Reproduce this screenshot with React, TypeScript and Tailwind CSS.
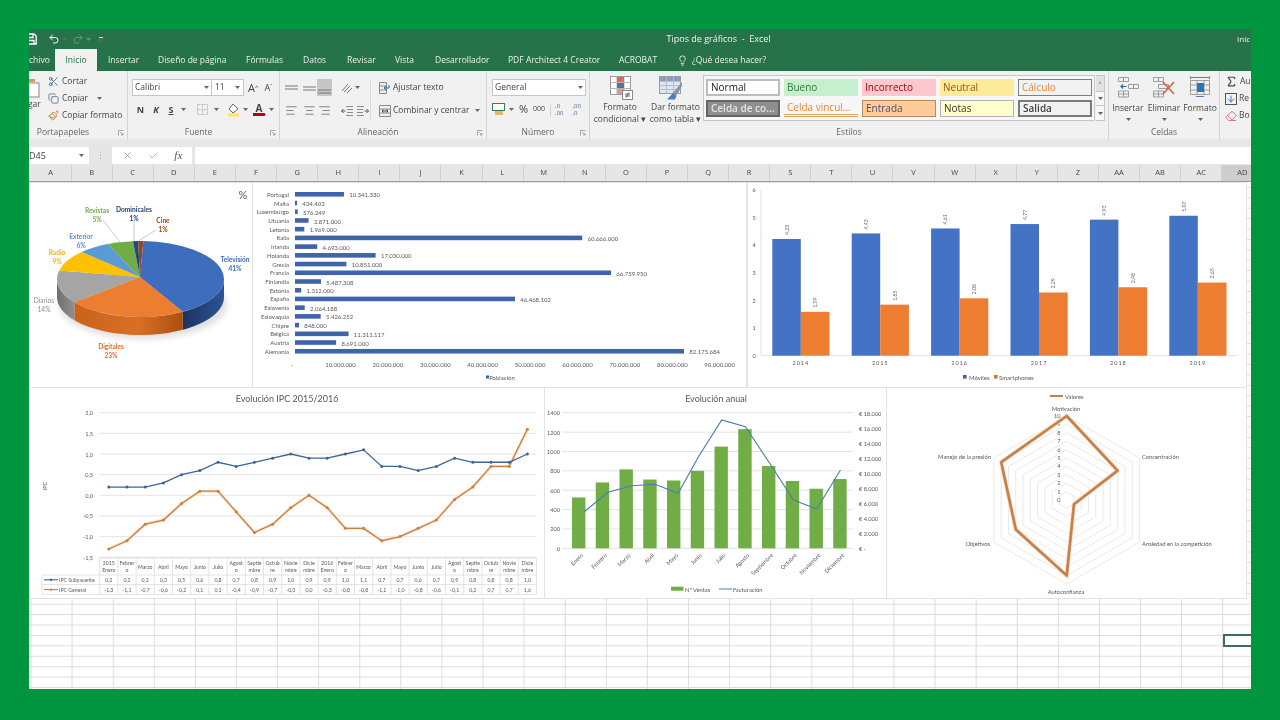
import { AlignCenter, AlignLeft, AlignRight, ArrowDown, Check, Copy, Eraser, Lightbulb, Paintbrush, Redo2, Scissors, Sigma, Undo2, X } from "lucide-react";
import type { ReactNode } from "react";

// ---- datos de los gráficos ----
const columns = "A B C D E F G H I J K L M N O P Q R S T U V W X Y Z AA AB AC AD".split(" ");

const population: [string, number, string][] = [
  ["Portugal", 10.34, "10.341.330"],
  ["Malta", 0.43, "434.403"],
  ["Luxemburgo", 0.58, "576.249"],
  ["Lituania", 2.87, "2.871.000"],
  ["Letonia", 1.97, "1.969.000"],
  ["Italia", 60.67, "60.666.000"],
  ["Irlanda", 4.69, "4.693.000"],
  ["Holanda", 17.03, "17.030.000"],
  ["Grecia", 10.85, "10.851.000"],
  ["Francia", 66.76, "66.759.950"],
  ["Finlandia", 5.49, "5.487.308"],
  ["Estonia", 1.31, "1.312.000"],
  ["España", 46.47, "46.468.102"],
  ["Eslovenia", 2.06, "2.064.188"],
  ["Eslovaquia", 5.43, "5.426.252"],
  ["Chipre", 0.85, "848.000"],
  ["Bélgica", 11.31, "11.311.117"],
  ["Austria", 8.69, "8.691.000"],
  ["Alemania", 82.18, "82.175.684"],
];

const phones = [
  [2014, 4.23, 1.59],
  [2015, 4.43, 1.85],
  [2016, 4.61, 2.08],
  [2017, 4.77, 2.29],
  [2018, 4.93, 2.48],
  [2019, 5.07, 2.65],
];

const ipcCore = [0.2, 0.2, 0.2, 0.3, 0.5, 0.6, 0.8, 0.7, 0.8, 0.9, 1.0, 0.9, 0.9, 1.0, 1.1, 0.7, 0.7, 0.6, 0.7, 0.9, 0.8, 0.8, 0.8, 1.0];
const ipcGeneral = [-1.3, -1.1, -0.7, -0.6, -0.2, 0.1, 0.1, -0.4, -0.9, -0.7, -0.3, 0.0, -0.3, -0.8, -0.8, -1.1, -1.0, -0.8, -0.6, -0.1, 0.2, 0.7, 0.7, 1.6];
const monthCells = [["Febrer", "o"], ["Marzo"], ["Abril"], ["Mayo"], ["Junio"], ["Julio"], ["Agost", "o"], ["Septie", "mbre"], ["Octub", "re"], ["Novie", "mbre"], ["Dicie", "mbre"]];
const ipcHeader = [["2015", "Enero"], ...monthCells, ["2016", "Enero"], ...monthCells];

// nombre, ventas, y de la línea de facturación, desplazamiento x de la línea
const sales: [string, number, number, number][] = [
  ["Enero", 525, 511.7, 5.6],
  ["Febrero", 680, 492.3, 5.6],
  ["Marzo", 815, 485.7, 5.5],
  ["Abril", 710, 484.3, 5],
  ["Mayo", 700, 493.3, 4.5],
  ["Junio", 800, 456.7, 1],
  ["Julio", 1050, 420, 0.5],
  ["Agosto", 1230, 426.7, 0.5],
  ["Septiembre", 850, 463.3, 1],
  ["Octubre", 695, 500, 1],
  ["Noviembre", 615, 509, 0.5],
  ["Diciembre", 715, 470, 0.5],
];

const pieSlices = [
  { pct: 41, top: "#3e6dbd", side: "url(#sideBlue)" },
  { pct: 23, top: "#ed7d31", side: "url(#sideOrange)" },
  { pct: 14, top: "#a5a5a5", side: "url(#sideGray)" },
  { pct: 9, top: "#ffc000", side: "#b08600" },
  { pct: 6, top: "#5b9bd5", side: "#3f6f9c" },
  { pct: 5, top: "#70ad47", side: "#4f7c32" },
  { pct: 1, top: "#264478", side: "#1a2f55" },
  { pct: 1, top: "#8a4b2a", side: "#5e3119" },
];

const pieLabels: [string, string, number, number, string, boolean][] = [
  ["Televisión", "41%", 235, 259, "#3f6bb5", true],
  ["Digitales", "23%", 111, 346, "#d9702a", true],
  ["Diarios", "14%", 44, 300, "#8c8c8c", false],
  ["Radio", "9%", 57, 252, "#efb60a", true],
  ["Exterior", "6%", 81, 236, "#5b8fc8", true],
  ["Revistas", "5%", 97, 210, "#70ad47", true],
  ["Dominicales", "1%", 134, 209, "#26406f", true],
  ["Cine", "1%", 163, 220, "#9e480e", true],
];

const radarAxes: [string, number][] = [
  ["Motivación", 10],
  ["Concentración", 7],
  ["Ansiedad en la competición", 1],
  ["Autoconfianza", 9],
  ["Objetivos", 7],
  ["Manejo de la presión", 9],
];

// ---- gráficos, con viewBox en coordenadas de la página ----
function PieChart() {
  const pt = (a: number, dy = 0) => [140.5 + 83.5 * Math.sin((a * Math.PI) / 180), 279 - 38 * Math.cos((a * Math.PI) / 180) + dy];
  let angle = 2;
  const parts = pieSlices.map((s) => {
    const a0 = angle;
    angle += s.pct * 3.6;
    return { ...s, a0, a1: angle };
  });
  const wall = (a0: number, a1: number) => {
    const from = Math.max(a0, 90);
    const to = Math.min(a1, 270);
    if (from >= to) return "";
    const steps = Array.from({ length: 25 }, (_, i) => from + ((to - from) * i) / 24);
    const up = steps.map((a) => pt(a).join(","));
    const down = steps.reverse().map((a) => pt(a, 18).join(","));
    return "M" + [...up, ...down].join("L") + "Z";
  };
  return (
    <svg viewBox="30 183 222 204" className="block h-[204px] w-[222px]">
      <defs>
        <linearGradient id="sideBlue" x1="0" x2="1" y1="0" y2="0">
          <stop offset="0" stopColor="#1b3360" />
          <stop offset="1" stopColor="#2d5596" />
        </linearGradient>
        <linearGradient id="sideOrange" x1="0" x2="1" y1="0" y2="0">
          <stop offset="0" stopColor="#c9631c" />
          <stop offset="0.6" stopColor="#d96f24" />
          <stop offset="1" stopColor="#a9500f" />
        </linearGradient>
        <linearGradient id="sideGray" x1="0" x2="1" y1="0" y2="0">
          <stop offset="0" stopColor="#6f6f6f" />
          <stop offset="1" stopColor="#8f8f8f" />
        </linearGradient>
        <filter id="pieShadow" x="-20%" y="-20%" width="140%" height="140%">
          <feGaussianBlur stdDeviation="3" />
        </filter>
      </defs>
      <ellipse cx="143" cy="305" rx="84" ry="34" fill="#000" opacity="0.12" filter="url(#pieShadow)" />
      {parts.map((s) => (
        <path key={s.top} d={wall(s.a0, s.a1)} fill={s.side} />
      ))}
      {parts.map((s) => {
        const [x0, y0] = pt(s.a0);
        const [x1, y1] = pt(s.a1);
        return <path key={s.top} d={`M140 277L${x0} ${y0}A83.5 38 0 ${s.a1 - s.a0 > 180 ? 1 : 0} 1 ${x1} ${y1}Z`} fill={s.top} />;
      })}
      <g stroke="#a6a6a6" strokeWidth="0.6" fill="none">
        <path d="M103 220L120 242" />
        <path d="M134 221L134 241" />
        <path d="M156 230L138 241" />
      </g>
      {pieLabels.map(([name, pct, x, y, color, bold]) => (
        <g key={name} fill={color} fontSize="6.6" fontWeight={bold ? 700 : 400} textAnchor="middle" dominantBaseline="central">
          <text x={x} y={y}>{name}</text>
          <text x={x} y={y + 8.5}>{pct}</text>
        </g>
      ))}
      <text x="243" y="194" fontSize="11" fill="#595959" textAnchor="middle" dominantBaseline="central">%</text>
    </svg>
  );
}

function PopulationChart() {
  const axis = ["10.000.000", "20.000.000", "30.000.000", "40.000.000", "50.000.000", "60.000.000", "70.000.000", "80.000.000", "90.000.000"];
  return (
    <svg viewBox="253 183 493 204" className="block h-[204px] w-[493px]">
      {population.map(([name, value, label], i) => {
        const y = 194.3 + i * 8.72;
        const end = 295 + value * 4.734;
        return (
          <g key={name} fontSize="6" fill="#595959" dominantBaseline="central">
            <text x="289" y={y} textAnchor="end">{name}</text>
            <rect x="295" y={y - 2.3} width={end - 295} height="4.6" fill="#3f64ab" />
            <text x={end + 5.3} y={y + 0.6}>{label}</text>
          </g>
        );
      })}
      <g fontSize="6" fill="#595959" textAnchor="middle" dominantBaseline="central">
        <text x="292" y="364">-</text>
        {axis.map((t, i) => (
          <text key={t} x={340.5 + i * 47.4} y="364">{t}</text>
        ))}
        <rect x="486" y="375.5" width="3" height="3" fill="#3f64ab" />
        <text x="502" y="377">Población</text>
      </g>
    </svg>
  );
}

function PhonesChart() {
  const y = (v: number) => 355.7 - v * 27.6;
  const fmt = (v: number) => v.toFixed(2).replace(".", ",");
  return (
    <svg viewBox="748 183 498 204" className="block h-[204px] w-[498px]">
      <path d="M761 190V355.7H1236" stroke="#d9d9d9" strokeWidth="0.8" fill="none" />
      {[0, 1, 2, 3, 4, 5, 6].map((v) => (
        <text key={v} x="754" y={y(v)} fontSize="5.5" fill="#595959" textAnchor="middle" dominantBaseline="central">{v}</text>
      ))}
      {phones.map(([year, a, b], i) => {
        const x = 772.3 + i * 79.4;
        return (
          <g key={year} fontSize="5.2" fill="#6b6b6b">
            <rect x={x} y={y(a)} width="28.5" height={355.7 - y(a)} fill="#4472c4" />
            <rect x={x + 28.5} y={y(b)} width="28.7" height={355.7 - y(b)} fill="#ed7d31" />
            <text transform={`translate(${x + 14.3} ${y(a) - 4}) rotate(-90)`} dominantBaseline="central">{fmt(a)}</text>
            <text transform={`translate(${x + 42.9} ${y(b) - 4}) rotate(-90)`} dominantBaseline="central">{fmt(b)}</text>
            <text x={x + 28.5} y="362.7" fontSize="5.6" letterSpacing="0.9" textAnchor="middle" dominantBaseline="central" fill="#595959">{year}</text>
          </g>
        );
      })}
      <g fontSize="6" fill="#595959" dominantBaseline="central">
        <rect x="963" y="375" width="3.6" height="3.6" fill="#3b5f9f" />
        <text x="969" y="377">Móviles</text>
        <rect x="994" y="375" width="3.6" height="3.6" fill="#d8742e" />
        <text x="999" y="377">Smartphones</text>
      </g>
    </svg>
  );
}

function IpcChart() {
  const left = 99.7;
  const cell = 18.2;
  const y = (v: number) => 412.7 + (2 - v) * 41.3;
  const cx = (i: number) => left + cell * (i + 0.5);
  const line = (data: number[]) => data.map((v, i) => `${cx(i)},${y(v)}`).join(" ");
  const fmt = (v: number) => v.toFixed(1).replace(".", ",");
  const ticks = [2, 1.5, 1, 0.5, 0, -0.5, -1, -1.5];
  return (
    <svg viewBox="30 388 514 210" className="block h-[210px] w-[514px]">
      <text x="287" y="398" fontSize="9" fill="#595959" textAnchor="middle" dominantBaseline="central">Evolución IPC 2015/2016</text>
      <text transform="translate(44 486) rotate(-90)" fontSize="5.6" fill="#595959" textAnchor="middle" dominantBaseline="central">IPC</text>
      {ticks.map((v) => (
        <g key={v}>
          <line x1={left} x2="536.5" y1={y(v)} y2={y(v)} stroke="#dcdcdc" strokeWidth="0.8" />
          <text x="93" y={y(v)} fontSize="5.6" fill="#595959" textAnchor="end" dominantBaseline="central">{fmt(v)}</text>
        </g>
      ))}
      <polyline points={line(ipcGeneral)} fill="none" stroke="#fbe3cd" strokeWidth="3" />
      <polyline points={line(ipcGeneral)} fill="none" stroke="#c9803e" strokeWidth="1.3" />
      {ipcGeneral.map((v, i) => (
        <circle key={i} cx={cx(i)} cy={y(v)} r="1.5" fill="#c9803e" />
      ))}
      <polyline points={line(ipcCore)} fill="none" stroke="#3b6597" strokeWidth="1.3" />
      {ipcCore.map((v, i) => (
        <circle key={i} cx={cx(i)} cy={y(v)} r="1.5" fill="#3b6597" />
      ))}
      <g stroke="#d9d9d9" strokeWidth="0.7">
        <path d="M99.7 558H536.5" />
        <path d="M42 575H536.5" />
        <path d="M42 584.5H536.5" />
        <path d="M42 594.3H536.5" />
        <path d="M42 575V594.3" />
        {ipcHeader.map((_, i) => (
          <path key={i} d={`M${left + i * cell} 558V594.3`} />
        ))}
        <path d="M536.5 558V594.3" />
      </g>
      <g fontSize="5.2" fill="#595959" textAnchor="middle" dominantBaseline="central">
        {ipcHeader.map((h, i) =>
          h.length === 2 ? (
            <g key={i}>
              <text x={cx(i)} y="562.5">{h[0]}</text>
              <text x={cx(i)} y="569.5">{h[1]}</text>
            </g>
          ) : (
            <text key={i} x={cx(i)} y="566.7">{h[0]}</text>
          )
        )}
        {ipcCore.map((v, i) => (
          <text key={i} x={cx(i)} y="579.8">{fmt(v)}</text>
        ))}
        {ipcGeneral.map((v, i) => (
          <text key={i} x={cx(i)} y="589.6">{fmt(v)}</text>
        ))}
      </g>
      <path d="M44 579.8H58" stroke="#3b6597" strokeWidth="1.1" />
      <circle cx="51" cy="579.8" r="1.2" fill="#3b6597" />
      <path d="M44 589.6H58" stroke="#c9803e" strokeWidth="1.1" />
      <circle cx="51" cy="589.6" r="1.2" fill="#c9803e" />
      <g fontSize="5.2" fill="#595959" dominantBaseline="central">
        <text x="59" y="579.8">IPC Subyacente</text>
        <text x="59" y="589.6">IPC General</text>
      </g>
    </svg>
  );
}

function SalesChart() {
  const y = (v: number) => 548.3 - v * 0.09685;
  const cx = (i: number) => 578.7 + i * 23.75;
  const left = [1400, 1200, 1000, 800, 600, 400, 200, 0];
  const right = ["18.000", "16.000", "14.000", "12.000", "10.000", "8.000", "6.000", "4.000", "2.000", "-"];
  return (
    <svg viewBox="545 388 342 210" className="block h-[210px] w-[342px]">
      <text x="716" y="398" fontSize="9" fill="#595959" textAnchor="middle" dominantBaseline="central">Evolución anual</text>
      {left.map((v) => (
        <g key={v}>
          <line x1="562" x2="852.7" y1={y(v)} y2={y(v)} stroke="#dcdcdc" strokeWidth="0.8" />
          <text x="560" y={y(v)} fontSize="5.6" fill="#595959" textAnchor="end" dominantBaseline="central">{v}</text>
        </g>
      ))}
      {right.map((t, i) => (
        <text key={t} x="859" y={413 + i * 15.04} fontSize="5.6" fill="#595959" dominantBaseline="central">€ {t}</text>
      ))}
      {sales.map(([name, v], i) => (
        <rect key={name} x={cx(i) - 6.7} y={y(v)} width="13.4" height={548.3 - y(v)} fill="#70ad47" />
      ))}
      <polyline points={sales.map(([, , py, dx], i) => `${cx(i) + dx},${py}`).join(" ")} fill="none" stroke="#4a7ea8" strokeWidth="1.1" />
      {sales.map(([name], i) => (
        <text key={name} transform={`translate(${cx(i) + 3} 554) rotate(-45)`} fontSize="5.6" fill="#595959" textAnchor="end" dominantBaseline="central">{name}</text>
      ))}
      <rect x="671" y="586.7" width="12.5" height="4" fill="#70ad47" />
      <path d="M719 589H732" stroke="#4a7ea8" strokeWidth="1" />
      <g fontSize="5.8" fill="#595959" dominantBaseline="central">
        <text x="685" y="589">Nº Ventas</text>
        <text x="733" y="589">Facturación</text>
      </g>
    </svg>
  );
}

function RadarChart() {
  const cx = 1066.7;
  const cy = 500;
  const point = (i: number, v: number) => {
    const a = (i * Math.PI) / 3;
    return `${cx + 8.4 * v * Math.sin(a)},${cy - 8.4 * v * Math.cos(a)}`;
  };
  const ring = (v: number) => [0, 1, 2, 3, 4, 5].map((i) => point(i, v)).join(" ");
  const shape = radarAxes.map(([, v], i) => point(i, v)).join(" ");
  return (
    <svg viewBox="887 388 359 210" className="block h-[210px] w-[359px]">
      <path d="M1050 396H1063" stroke="#c5814a" strokeWidth="2" />
      <text x="1065" y="396" fontSize="5.8" fill="#595959" dominantBaseline="central">Valores</text>
      {[1, 2, 3, 4, 5, 6, 7, 8, 9, 10].map((v) => (
        <polygon key={v} points={ring(v)} fill="none" stroke="#dfdfdf" strokeWidth="0.7" />
      ))}
      {[0, 1, 2, 3, 4, 5, 6, 7, 8, 9, 10].map((v) => (
        <text key={v} x="1060.5" y={cy - 0.5 - v * 8.4} fontSize="5.6" fill="#595959" textAnchor="end" dominantBaseline="central">{v}</text>
      ))}
      <polygon points={shape} fill="none" stroke="#fbe3cd" strokeWidth="4.4" />
      <polygon points={shape} fill="none" stroke="#c4814b" strokeWidth="2.7" strokeLinejoin="round" />
      <g fontSize="5.8" fill="#595959" dominantBaseline="central">
        <text x="1066" y="408" textAnchor="middle">Motivación</text>
        <text x="1142" y="456">Concentración</text>
        <text x="1142" y="543">Ansiedad en la competición</text>
        <text x="1066" y="591" textAnchor="middle">Autoconfianza</text>
        <text x="990" y="543" textAnchor="end">Objetivos</text>
        <text x="991" y="456" textAnchor="end">Manejo de la presión</text>
      </g>
    </svg>
  );
}

// ---- piezas de la cinta ----
function Caret({ dim }: { dim?: boolean }) {
  return (
    <svg width="5" height="3" viewBox="0 0 5 3" className="shrink-0">
      <path d="M0 0H5L2.5 3Z" fill={dim ? "#5f9a7c" : "#666"} />
    </svg>
  );
}

function Launcher() {
  return (
    <svg width="6" height="6" viewBox="0 0 6 6" className="absolute bottom-[3px] right-[3px]">
      <path d="M0.5 5.5V0.5H5.5M2 2L5 5M5 3V5H3" fill="none" stroke="#8a8a8a" strokeWidth="0.7" />
    </svg>
  );
}

function Group({ className, labelClass, label, launcher, children }: { className: string; labelClass?: string; label: string; launcher?: boolean; children: ReactNode }) {
  return (
    <div className={`relative flex h-full shrink-0 flex-col border-r border-[#d4d4d4] ${className}`}>
      <div className="min-h-0 flex-1">{children}</div>
      <div className={`h-[13px] text-center text-[8.5px] leading-[12px] text-[#666] ${labelClass ?? ""}`}>{label}</div>
      {launcher && <Launcher />}
    </div>
  );
}

function Lines({ rows, box }: { rows: number[]; box?: boolean }) {
  return (
    <svg width="15" height="17" viewBox="0 0 15 17" className={`block shrink-0 ${box ? "bg-[#c6c6c6]" : ""}`}>
      {rows.map((y) => (
        <path key={y} d={`M1 ${y}H14`} stroke="#777" strokeWidth="1" />
      ))}
    </svg>
  );
}

function IndentIcon({ flip }: { flip?: boolean }) {
  return (
    <svg width="12" height="10" viewBox="0 0 12 10" className={`block shrink-0 ${flip ? "-scale-x-100" : ""}`}>
      <path d="M5 0.5H12M6 3.5H12M6 6.5H12M5 9.5H12" stroke="#8a8a8a" />
      <path d="M4.5 5H0.5M2.5 3L0.5 5L2.5 7" fill="none" stroke="#2a66a8" />
    </svg>
  );
}

function StyleCell({ className, children }: { className: string; children: ReactNode }) {
  return <div className={`flex h-[17px] w-[74px] items-center overflow-hidden whitespace-nowrap pl-[3px] text-[10px] ${className}`}>{children}</div>;
}

function SaveIcon() {
  return (
    <svg width="8" height="12" viewBox="0 0 8 12" fill="none" stroke="#fff" strokeWidth="1.3" className="shrink-0">
      <path d="M0 1H5L7.2 3V11H0" />
      <path d="M0 4.5H4V1M0 7.5H5V11" />
    </svg>
  );
}

function CondFormatIcon() {
  return (
    <svg width="23" height="24" viewBox="0 0 23 24">
      <rect x="0.5" y="0.5" width="20" height="18" fill="#fff" stroke="#9a9a9a" />
      <path d="M7 0.5V18.5M14 0.5V18.5M0.5 6.5H20.5M0.5 12.5H20.5" stroke="#b5b5b5" />
      <rect x="7" y="1" width="7" height="5" fill="#d66a6a" />
      <rect x="7" y="7" width="7" height="5" fill="#5a6f9e" />
      <rect x="7" y="13" width="7" height="5" fill="#d99a9a" />
      <rect x="12.5" y="14.5" width="10" height="9" fill="#fff" stroke="#8a8a8a" />
      <path d="M15 18H20M15 20H20M19 16.5L16 21.5" stroke="#444" strokeWidth="0.8" />
    </svg>
  );
}

function TableFormatIcon() {
  return (
    <svg width="24" height="24" viewBox="0 0 24 24">
      <rect x="0.5" y="0.5" width="21" height="17" fill="#dfe6f2" stroke="#9a9a9a" />
      <rect x="1" y="1" width="20" height="4" fill="#8c9dbd" />
      <path d="M7.5 0.5V17.5M14.5 0.5V17.5M0.5 5.5H21.5M0.5 9.5H21.5M0.5 13.5H21.5" stroke="#b5bdcc" />
      <path d="M23 6L14 17L17 20L23 10Z" fill="#8a93a5" />
      <path d="M14 17L8 23.5H16L17.5 20Z" fill="#4c7fc0" />
    </svg>
  );
}

function InsertCellsIcon() {
  return (
    <svg width="22" height="22" viewBox="0 0 22 22" fill="none" stroke="#8a8a8a" strokeWidth="0.8">
      <path d="M1.5 1.5H6.5V5.5H1.5ZM6.5 1.5H11.5V5.5H6.5Z" />
      <path d="M11.5 8.5H16.5V12.5H11.5ZM16.5 8.5H21.5V12.5H16.5Z" />
      <path d="M1.5 15H11.5V21H1.5ZM6.5 15V21M1.5 18H11.5" />
      <path d="M9.5 10.5H4M6 8.5L4 10.5L6 12.5" stroke="#2a66a8" strokeWidth="1.1" />
    </svg>
  );
}

function DeleteCellsIcon() {
  return (
    <svg width="24" height="22" viewBox="0 0 24 22" fill="none" stroke="#8a8a8a" strokeWidth="0.8">
      <path d="M1.5 1.5H6.5V5.5H1.5ZM6.5 1.5H11.5V5.5H6.5Z" />
      <path d="M6.5 8.5H16.5V12.5H6.5Z" />
      <path d="M1.5 15H11.5V21H1.5ZM6.5 15V21M1.5 18H11.5" />
      <path d="M11 6L22 18M22 6L11 18" stroke="#d9613c" strokeWidth="1.6" />
    </svg>
  );
}

function FormatCellsIcon() {
  return (
    <svg width="22" height="22" viewBox="0 0 22 22" fill="none" stroke="#8a8a8a" strokeWidth="0.8">
      <path d="M1.5 4.5H20.5V18.5H1.5ZM8 4.5V18.5M15 4.5V18.5M1.5 9H20.5M1.5 14H20.5" />
      <rect x="8" y="7" width="7" height="9" fill="#2f74b5" stroke="none" />
      <path d="M1.5 1.5H20.5M1.5 0.5V3M20.5 0.5V3M7 20.5H15" stroke="#2a66a8" />
    </svg>
  );
}

function Ribbon() {
  return (
    <div className="flex h-[68px] shrink-0 bg-[#f1f1f1] text-[8.5px] text-[#444]">
      <Group className="w-[99px]" labelClass="pr-[30px]" label="Portapapeles" launcher>
        <div className="flex">
          <div className="w-[19px] overflow-hidden pt-[7px]">
            <svg width="13" height="20" viewBox="0 0 13 20" className="-ml-[2px]">
              <rect x="1" y="5" width="11" height="14" fill="#fff" stroke="#888" />
              <path d="M0 1H8V4H0Z" fill="#d29a56" />
            </svg>
            <div className="-ml-[1px] mt-[1px] leading-[10px]">gar</div>
          </div>
          <div className="flex flex-col pt-[2px]">
            <div className="flex h-[17px] items-center gap-[3px]">
              <Scissors size={11} className="text-[#4a6a96]" />
              <span>Cortar</span>
            </div>
            <div className="flex h-[17px] items-center gap-[3px]">
              <Copy size={11} className="text-[#6b7a90]" />
              <span>Copiar</span>
              <span className="ml-[6px]"><Caret /></span>
            </div>
            <div className="flex h-[17px] items-center gap-[3px]">
              <Paintbrush size={11} className="text-[#b8862c]" />
              <span className="whitespace-nowrap">Copiar formato</span>
            </div>
          </div>
        </div>
      </Group>

      <Group className="w-[152px]" labelClass="pr-[10px]" label="Fuente" launcher>
        <div className="flex items-center pl-[4px] pt-[8px]">
          <div className="flex h-[17px] w-[80px] items-center justify-between border border-[#c6c6c6] bg-white px-[2px]">
            <span>Calibri</span>
            <Caret />
          </div>
          <div className="flex h-[17px] w-[32px] items-center justify-between border border-l-0 border-[#c6c6c6] bg-white px-[3px]">
            <span>11</span>
            <Caret />
          </div>
          <span className="ml-[4px] text-[11px] leading-none">A<sup className="text-[6px]">^</sup></span>
          <span className="ml-[6px] text-[9px] leading-none">A<sup className="text-[6px]">ˇ</sup></span>
        </div>
        <div className="mt-[5px] flex h-[17px] items-center pl-[5px] text-[9px] text-[#444]">
          <span className="w-[15px] text-center font-bold">N</span>
          <span className="w-[16px] text-center font-bold italic">K</span>
          <span className="w-[14px] text-center font-bold underline">S</span>
          <span className="ml-[3px]"><Caret /></span>
          <svg width="11" height="11" viewBox="0 0 11 11" className="ml-[11px]">
            <path d="M0.5 0.5H10.5V10.5H0.5ZM5.5 0.5V10.5M0.5 5.5H10.5" fill="none" stroke="#b5b5b5" strokeDasharray="1 0.6" />
          </svg>
          <span className="ml-[6px]"><Caret /></span>
          <svg width="13" height="14" viewBox="0 0 13 14" className="ml-[8px]">
            <path d="M6 1L11 6L6 10L2 6Z" fill="#fff" stroke="#666" />
            <rect x="1" y="10.5" width="11" height="3" fill="#ffe94d" />
          </svg>
          <span className="ml-[3px]"><Caret /></span>
          <span className="ml-[5px] flex flex-col items-center text-[10px] font-bold leading-[9px]">
            A
            <span className="h-[3px] w-[12px] bg-[#c00000]" />
          </span>
          <span className="ml-[4px]"><Caret /></span>
        </div>
      </Group>

      <Group className="w-[207px]" labelClass="pr-[10px]" label="Alineación" launcher>
        <div className="flex pt-[8px]">
          <div className="flex w-[91px] flex-col gap-[6px] border-r border-[#dadada] pl-[4px]">
            <div className="flex h-[17px] items-center">
              <Lines rows={[7, 10]} />
              <span className="w-[3px] shrink-0" />
              <Lines rows={[8, 11]} />
              <Lines rows={[11, 14]} box />
              <svg width="12" height="12" viewBox="0 0 12 12" fill="none" stroke="#777" className="ml-[9px] shrink-0">
                <path d="M1 9L7 2M3 10L9 4M6 11L11 6" />
              </svg>
              <span className="ml-[2px]"><Caret /></span>
            </div>
            <div className="flex h-[17px] items-center">
              <AlignLeft size={13} className="ml-[1px] shrink-0 text-[#888]" />
              <AlignCenter size={13} className="ml-[4.5px] shrink-0 text-[#888]" />
              <AlignRight size={13} className="ml-[2px] shrink-0 text-[#888]" />
              <span className="ml-[10px]"><IndentIcon /></span>
              <span className="ml-[4px]"><IndentIcon flip /></span>
            </div>
          </div>
          <div className="flex flex-col gap-[6px] pl-[8px]">
            <div className="flex h-[17px] items-center gap-[2px]">
              <svg width="12" height="12" viewBox="0 0 12 12" fill="none" stroke="#8a8a8a" className="shrink-0">
                <path d="M0.5 0.5H7.5V11.5H0.5ZM0.5 4H7.5M0.5 8H7.5" />
                <path d="M5 6H10V3M7 8L5 6L7 4" stroke="#2a66a8" />
              </svg>
              <span className="whitespace-nowrap">Ajustar texto</span>
            </div>
            <div className="flex h-[17px] items-center gap-[2px]">
              <svg width="12" height="12" viewBox="0 0 12 12" fill="none" stroke="#8a8a8a" className="shrink-0">
                <path d="M0.5 0.5H11.5V11.5H0.5ZM0.5 4H11.5M0.5 8H11.5" />
                <path d="M3 6H9M4.5 4.5L3 6L4.5 7.5M7.5 4.5L9 6L7.5 7.5" stroke="#444" />
              </svg>
              <span className="whitespace-nowrap">Combinar y centrar</span>
              <span className="ml-[3px]"><Caret /></span>
            </div>
          </div>
        </div>
      </Group>

      <Group className="w-[103px]" label="Número" launcher>
        <div className="pl-[5px] pt-[8px]">
          <div className="flex h-[17px] w-[94px] items-center justify-between border border-[#c6c6c6] bg-white px-[2px]">
            <span>General</span>
            <Caret />
          </div>
        </div>
        <div className="mt-[5px] flex h-[17px] items-center pl-[5px]">
          <svg width="13" height="13" viewBox="0 0 13 13">
            <rect x="0.5" y="0.5" width="12" height="7" fill="#fff" stroke="#3c7a5a" />
            <rect x="3" y="8" width="8" height="4" fill="#e6b86a" />
          </svg>
          <span className="ml-[4px]"><Caret /></span>
          <span className="ml-[5px] text-[11px] text-[#444]">%</span>
          <span className="ml-[5px] text-[7px]">000</span>
          <span className="ml-[5px] h-[14px] w-px bg-[#d4d4d4]" />
          <span className="ml-[4px] text-[6px] leading-[7px] text-[#4a6a96]">,0<br />,00</span>
          <span className="ml-[9px] text-[6px] leading-[7px] text-[#4a6a96]">,00<br />,0</span>
        </div>
      </Group>

      <Group className="w-[519px]" label="Estilos">
        <div className="flex">
          <div className="flex w-[113px] flex-col items-center pt-[5px] text-center leading-[12px]">
            <div className="flex h-[25px] w-full justify-around px-[7px]">
              <CondFormatIcon />
              <TableFormatIcon />
            </div>
            <div className="flex w-full justify-around pl-[2px]">
              <div className="whitespace-nowrap">Formato<br />condicional ▾</div>
              <div className="whitespace-nowrap">Dar formato<br />como tabla ▾</div>
            </div>
          </div>
          <div className="flex pt-[4px]">
            <div className="grid h-[46px] grid-cols-[repeat(5,74px)] gap-x-[4px] gap-y-[4px] border border-[#c6c6c6] bg-[#f7f7f7] px-[2px] py-[3px]">
              <StyleCell className="border-2 border-[#bdbdbd] bg-white text-[#222]">Normal</StyleCell>
              <StyleCell className="bg-[#c6efce] text-[#2c7a3a]">Bueno</StyleCell>
              <StyleCell className="bg-[#ffc7ce] text-[#9c0006]">Incorrecto</StyleCell>
              <StyleCell className="bg-[#ffeb9c] text-[#9c5700]">Neutral</StyleCell>
              <StyleCell className="border border-[#7f7f7f] bg-[#f2f2f2] text-[#e5873b]">Cálculo</StyleCell>
              <StyleCell className="border-2 border-[#666] bg-[#8f8f8f] font-semibold text-[#e4e4e4]">Celda de co...</StyleCell>
              <StyleCell className="border-b-[3px] border-double border-[#e8a76a] text-[#e5873b]">Celda vincul...</StyleCell>
              <StyleCell className="border border-[#b98a5c] bg-[#ffcc99] text-[#4c4c6e]">Entrada</StyleCell>
              <StyleCell className="border border-[#b2b2b2] bg-[#ffffcc] text-[#333]">Notas</StyleCell>
              <StyleCell className="border-2 border-[#7a7a7a] bg-[#f2f2f2] font-semibold text-[#3f3f3f]">Salida</StyleCell>
            </div>
            <div className="ml-[1px] flex h-[46px] w-[9px] flex-col border border-l-0 border-[#c6c6c6] bg-[#f7f7f7] text-[5px] leading-[14px] text-[#666]">
              <span className="h-[15px] bg-[#e2e2e2] text-center">˄</span>
              <span className="flex h-[15px] items-center justify-center border-y border-[#c6c6c6]"><Caret /></span>
              <span className="flex h-[14px] items-center justify-center"><Caret /></span>
            </div>
          </div>
        </div>
      </Group>

      <Group className="w-[111px]" label="Celdas">
        <div className="flex justify-between px-[2px] pt-[5px] text-center leading-[12px]">
          <div className="flex w-[34px] flex-col items-center">
            <InsertCellsIcon />
            <span className="mt-[4px]">Insertar</span>
            <span className="mt-[4px]"><Caret /></span>
          </div>
          <div className="flex w-[34px] flex-col items-center">
            <DeleteCellsIcon />
            <span className="mt-[4px]">Eliminar</span>
            <span className="mt-[4px]"><Caret /></span>
          </div>
          <div className="flex w-[34px] flex-col items-center">
            <FormatCellsIcon />
            <span className="mt-[4px]">Formato</span>
            <span className="mt-[4px]"><Caret /></span>
          </div>
        </div>
      </Group>

      <div className="flex flex-1 flex-col overflow-hidden pl-[5px] pt-[2px]">
        <div className="flex h-[17px] items-center gap-[2px]">
          <Sigma size={13} className="shrink-0 text-[#444]" />
          <span>Au</span>
        </div>
        <div className="flex h-[17px] items-center gap-[2px]">
          <ArrowDown size={12} className="shrink-0 border border-[#555] text-[#2a66a8]" />
          <span>Re</span>
        </div>
        <div className="flex h-[17px] items-center gap-[2px]">
          <Eraser size={12} className="shrink-0 text-[#d9748f]" />
          <span>Bo</span>
        </div>
      </div>
    </div>
  );
}

export default function App() {
  return (
    <div className="h-[720px] w-[1280px] overflow-hidden bg-[#009640] px-[29px] pb-[31px] pt-[29px] font-['Open_Sans',sans-serif]">
      <div className="flex h-full w-full flex-col overflow-hidden bg-white blur-[0.35px]">
        {/* barra de título */}
        <div className="flex h-[20px] shrink-0 items-center bg-[#26734a] text-[9px] text-[#eef5f0]">
          <div className="flex w-[637.5px] items-center">
            <SaveIcon />
            <Undo2 size={12} className="ml-[11px] text-white" />
            <span className="ml-[2px]"><Caret /></span>
            <Redo2 size={12} className="ml-[5px] text-[#5f9a7c]" />
            <span className="ml-[2px]"><Caret dim /></span>
            <span className="ml-[7px] flex flex-col items-center gap-px">
              <span className="h-px w-[4px] bg-[#dbe9e0]" />
              <Caret />
            </span>
          </div>
          <span className="whitespace-pre">Tipos de gráficos  -  Excel</span>
          <span className="ml-auto whitespace-nowrap pr-px text-[8px]">Inic</span>
        </div>

        {/* pestañas */}
        <div className="flex h-[22px] shrink-0 items-center bg-[#26734a] text-[8.5px] text-[#e8f1ec]">
          <span className="w-[26px]">chivo</span>
          <span className="flex h-full w-[42px] items-center justify-center bg-[#f1f1f1] text-[#26734a]">Inicio</span>
          <span className="ml-[11px] w-[50px]">Insertar</span>
          <span className="w-[88px]">Diseño de página</span>
          <span className="w-[57px]">Fórmulas</span>
          <span className="w-[44px]">Datos</span>
          <span className="w-[48px]">Revisar</span>
          <span className="w-[40px]">Vista</span>
          <span className="w-[73px]">Desarrollador</span>
          <span className="w-[111px]">PDF Architect 4 Creator</span>
          <span className="w-[58px]">ACROBAT</span>
          <Lightbulb size={11} className="text-[#e8f1ec]" />
          <span className="ml-[4px]">¿Qué desea hacer?</span>
        </div>

        <Ribbon />
        <div className="h-[8px] shrink-0 bg-[#e6e6e6]" />

        {/* barra de fórmulas */}
        <div className="flex h-[18px] shrink-0 items-stretch bg-[#e6e6e6] pb-px text-[9px] text-[#444]">
          <div className="flex w-[60px] items-center justify-between bg-white pr-[5px]">
            <span>D45</span>
            <Caret />
          </div>
          <span className="flex w-[23px] items-center justify-center text-[#aaa]">⋮</span>
          <div className="flex w-[80px] items-center justify-around bg-white px-[2px]">
            <X size={11} className="text-[#aaa]" />
            <Check size={11} className="text-[#aaa]" />
            <span className="font-['Liberation_Serif',serif] text-[11px] italic text-[#555]">fx</span>
          </div>
          <div className="ml-[3px] flex-1 bg-white" />
        </div>

        {/* cabecera de columnas */}
        <div className="flex h-[17px] shrink-0 border-b border-[#9e9e9e] bg-[#e6e6e6] pl-[1.5px] text-[7.5px] text-[#444]">
          {columns.map((c) => (
            <div key={c} className={`flex w-[41.1px] shrink-0 items-center justify-center border-r border-[#cfcfcf] ${c === "AD" ? "bg-[#cdcdcd]" : ""}`}>{c}</div>
          ))}
        </div>

        {/* hoja con los gráficos */}
        <div className="relative min-h-0 flex-1 bg-white bg-[linear-gradient(to_right,#dcdcdc_1px,transparent_1px),linear-gradient(to_bottom,#dcdcdc_1px,transparent_1px)] bg-[size:41.1px_10.43px] bg-[position:1.5px_4.8px] pl-px pt-px font-['Lato',sans-serif]">
          <div className="flex">
            <div className="bg-white ring-1 ring-[#e2e2e2]"><PieChart /></div>
            <div className="ml-px bg-white ring-1 ring-[#e2e2e2]"><PopulationChart /></div>
            <div className="ml-[2px] bg-white ring-1 ring-[#e2e2e2]"><PhonesChart /></div>
          </div>
          <div className="mt-px flex">
            <div className="bg-white ring-1 ring-[#e2e2e2]"><IpcChart /></div>
            <div className="ml-px bg-white ring-1 ring-[#e2e2e2]"><SalesChart /></div>
            <div className="bg-white ring-1 ring-[#e2e2e2]"><RadarChart /></div>
          </div>
          <div className="absolute left-[1194px] top-[452px] h-[13px] w-[28px] border-2 border-r-0 border-[#3f6e57]" />
        </div>
      </div>
    </div>
  );
}
